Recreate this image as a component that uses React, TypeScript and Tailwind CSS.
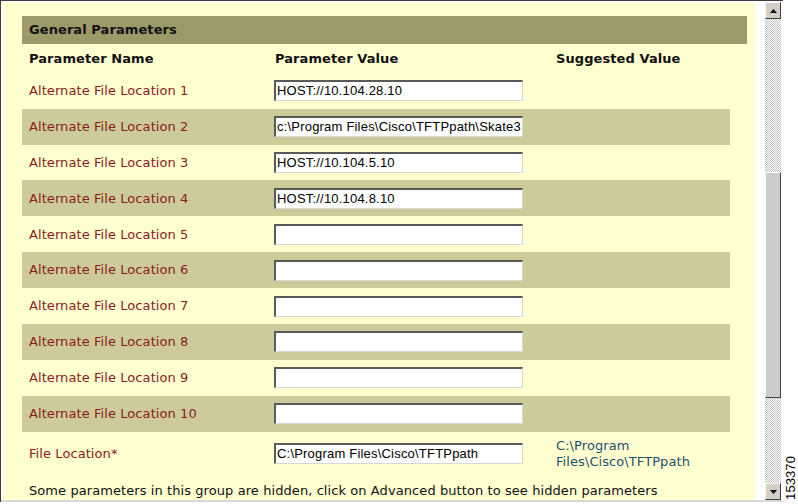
import React from 'react';

type Row = { name: string; value: string };

const rows: Row[] = [
  { name: 'Alternate File Location 1', value: 'HOST://10.104.28.10' },
  { name: 'Alternate File Location 2', value: 'c:\\Program Files\\Cisco\\TFTPpath\\Skate3' },
  { name: 'Alternate File Location 3', value: 'HOST://10.104.5.10' },
  { name: 'Alternate File Location 4', value: 'HOST://10.104.8.10' },
  { name: 'Alternate File Location 5', value: '' },
  { name: 'Alternate File Location 6', value: '' },
  { name: 'Alternate File Location 7', value: '' },
  { name: 'Alternate File Location 8', value: '' },
  { name: 'Alternate File Location 9', value: '' },
  { name: 'Alternate File Location 10', value: '' },
];

const TextBox: React.FC<{ value: string }> = ({ value }) => (
  <div className="h-[21px] w-[249px] overflow-hidden whitespace-nowrap border-t-2 border-l-2 border-b border-r border-t-[#5a5a5a] border-l-[#5a5a5a] border-b-[#d8d8d8] border-r-[#d8d8d8] bg-white pl-[1px] font-['Liberation_Sans',Arial,sans-serif] text-[13px] leading-[18px] tracking-[0.2px] text-black">
    {value}
  </div>
);

const ScrollButton: React.FC<{ up?: boolean }> = ({ up }) => (
  <div className="flex h-[17px] w-[16px] items-center justify-center border border-t-[#f4f4f4] border-l-[#f4f4f4] border-b-[#404040] border-r-[#404040] bg-[#d4d0c8]">
    <svg width="7" height="4" viewBox="0 0 7 4">
      {up ? <path d="M3.5 0 L7 4 L0 4 Z" fill="#000" /> : <path d="M0 0 L7 0 L3.5 4 Z" fill="#000" />}
    </svg>
  </div>
);

export default function App() {
  return (
    <div className="flex h-[504px] w-[798px] overflow-hidden bg-white font-['DejaVu_Sans',Verdana,sans-serif] tracking-[0.08px]">
      <div className="flex h-[502px] w-[783px] flex-col border-l border-t border-[#3c3c3c]">
        <div className="flex flex-1 overflow-hidden pl-[2px] pt-[1px]">
          <div className="flex w-[752px] flex-col bg-[#ffffd0] pl-[19px] pt-[14px]">
            <div className="flex h-[28px] w-[725px] items-center bg-[#9c9a68] pl-[7px] text-[13px] font-bold text-[#111]">
              General Parameters
            </div>
            <div className="flex h-[29px] w-[708px] items-center text-[13px] font-bold text-[#111]">
              <div className="w-[252px] pl-[7px]">Parameter Name</div>
              <div className="w-[282px] pl-[1px]">Parameter Value</div>
              <div>Suggested Value</div>
            </div>
            {rows.map((r, i) => (
              <div
                key={r.name}
                className={`flex h-[36px] w-[708px] items-center text-[13px] ${i % 2 === 1 ? 'bg-[#cccb99]' : ''}`}
              >
                <div className="w-[252px] pl-[7px] text-[#8a1c1c]">{r.name}</div>
                <TextBox value={r.value} />
              </div>
            ))}
            <div className="flex h-[44px] w-[708px] items-center text-[13px]">
              <div className="w-[252px] pl-[7px] text-[#8a1c1c]">File Location*</div>
              <div className="w-[282px]">
                <TextBox value="C:\Program Files\Cisco\TFTPpath" />
              </div>
              <div className="leading-[16px] text-[#1f4f6f]">
                C:\Program
                <br />
                Files\Cisco\TFTPpath
              </div>
            </div>
            <div className="pl-[7px] pt-[5px] text-[13px] text-[#111]">
              Some parameters in this group are hidden, click on Advanced button to see hidden parameters
            </div>
          </div>
          <div className="w-[10px] bg-white" />
          <div className="flex w-[16px] flex-col bg-[repeating-conic-gradient(#c4c4c4_0_25%,#ffffff_0_50%)] bg-[length:2px_2px]">
            <ScrollButton up />
            <div className="h-[153px]" />
            <div className="h-[226px] border border-t-white border-l-white border-b-[#404040] border-r-[#404040] bg-[#cccccc]" />
            <div className="flex-1" />
            <ScrollButton />
          </div>
        </div>
        <div className="h-[2px] bg-[#d8d8d8]" />
      </div>
      <div className="flex w-[15px] flex-col justify-end pb-[4px] pl-[2px]">
        <div className="rotate-180 font-['Liberation_Sans',Arial,sans-serif] text-[13px] leading-[12px] text-black [writing-mode:vertical-rl]">
          153370
        </div>
      </div>
    </div>
  );
}
